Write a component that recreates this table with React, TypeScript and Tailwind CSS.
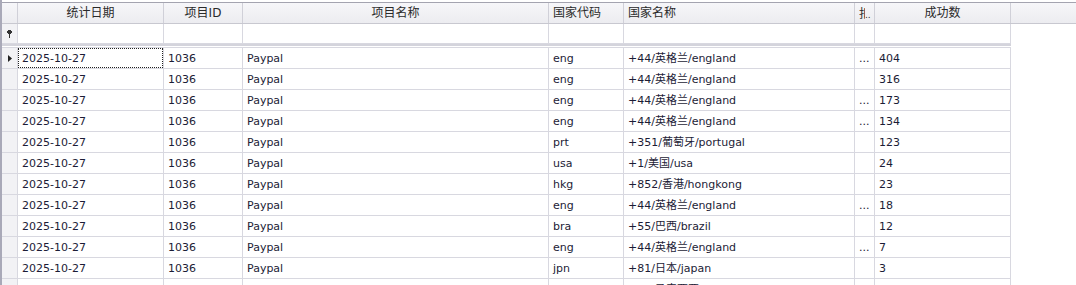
import React from 'react'

type Row = {
  date: string
  id: string
  name: string
  code: string
  country: string
  more: boolean
  count: string
}

const rows: Row[] = [
  { date: '2025-10-27', id: '1036', name: 'Paypal', code: 'eng', country: '+44/英格兰/england', more: true, count: '404' },
  { date: '2025-10-27', id: '1036', name: 'Paypal', code: 'eng', country: '+44/英格兰/england', more: false, count: '316' },
  { date: '2025-10-27', id: '1036', name: 'Paypal', code: 'eng', country: '+44/英格兰/england', more: true, count: '173' },
  { date: '2025-10-27', id: '1036', name: 'Paypal', code: 'eng', country: '+44/英格兰/england', more: true, count: '134' },
  { date: '2025-10-27', id: '1036', name: 'Paypal', code: 'prt', country: '+351/葡萄牙/portugal', more: false, count: '123' },
  { date: '2025-10-27', id: '1036', name: 'Paypal', code: 'usa', country: '+1/美国/usa', more: false, count: '24' },
  { date: '2025-10-27', id: '1036', name: 'Paypal', code: 'hkg', country: '+852/香港/hongkong', more: false, count: '23' },
  { date: '2025-10-27', id: '1036', name: 'Paypal', code: 'eng', country: '+44/英格兰/england', more: true, count: '18' },
  { date: '2025-10-27', id: '1036', name: 'Paypal', code: 'bra', country: '+55/巴西/brazil', more: false, count: '12' },
  { date: '2025-10-27', id: '1036', name: 'Paypal', code: 'eng', country: '+44/英格兰/england', more: true, count: '7' },
  { date: '2025-10-27', id: '1036', name: 'Paypal', code: 'jpn', country: '+81/日本/japan', more: false, count: '3' },
  { date: '2025-10-27', id: '1036', name: 'Paypal', code: 'mys', country: '+60/马来西亚/malaysia', more: false, count: '2' },
]

const line = 'border-[#d8d8e0]'

function HeaderCell({ w, children, center = true }: { w: string; children?: React.ReactNode; center?: boolean }) {
  return (
    <div
      className={`${w} shrink-0 h-full border-r border-[#d0d0d8] flex items-center overflow-hidden whitespace-nowrap ${
        center ? 'justify-center' : 'pl-[4px]'
      }`}
    >
      {children}
    </div>
  )
}

function Cell({ w, children }: { w: string; children?: React.ReactNode }) {
  return (
    <div className={`${w} shrink-0 h-full border-r ${line} flex items-center pl-[4px] pt-[2px] overflow-hidden whitespace-nowrap`}>
      {children}
    </div>
  )
}

export default function App() {
  return (
    <div className="w-[1076px] h-[285px] overflow-hidden bg-white font-['DejaVu_Sans','Noto_Sans_CJK_SC',sans-serif] text-[11px] text-[#1c1c36]">
      <div className="h-full border-l-2 border-[#a9a9b8] pt-[2px] flex flex-col">
        {/* column headers */}
        <div className="h-[22px] shrink-0 flex border-t border-b border-t-[#a4a4b0] border-b-[#c8c8d0] bg-gradient-to-b from-[#f6f6f9] to-[#ececf0] text-[12px] text-[#2a2a2a]">
          <div className="w-[16px] shrink-0 h-full border-r border-[#d0d0d8]" />
          <HeaderCell w="w-[146px]">统计日期</HeaderCell>
          <HeaderCell w="w-[79px]">项目ID</HeaderCell>
          <HeaderCell w="w-[306px]">项目名称</HeaderCell>
          <HeaderCell w="w-[75px]" center={false}>国家代码</HeaderCell>
          <HeaderCell w="w-[231px]" center={false}>国家名称</HeaderCell>
          <HeaderCell w="w-[20px]" center={false}>
            <span className="inline-block w-[6px] h-[16px] overflow-hidden">扣</span>
            <span className="text-[9px] leading-none pt-[4px]">..</span>
          </HeaderCell>
          <HeaderCell w="w-[136px]">成功数</HeaderCell>
          <div className="flex-1" />
        </div>

        {/* auto filter row */}
        <div className="w-[1009px] h-[20px] shrink-0 flex border-b border-[#d8d8e0]">
          <div className="w-[16px] shrink-0 h-full border-r border-[#d8d8e0] bg-[#f2f2f5] flex items-center justify-center">
            <svg width="5" height="8" viewBox="0 0 5 8">
              <path d="M1 0h3v1h1v2H4v1H3v4H2V4H1V3H0V1h1z" fill="#333" />
            </svg>
          </div>
          <Cell w="w-[146px]" />
          <Cell w="w-[79px]" />
          <Cell w="w-[306px]" />
          <Cell w="w-[75px]" />
          <Cell w="w-[231px]" />
          <Cell w="w-[20px]" />
          <Cell w="w-[136px]" />
        </div>
        <div className="w-[1009px] h-[2px] shrink-0 bg-[#d4d4dc]" />
        <div className="h-[1px] shrink-0" />

        {/* data rows */}
        <div className="w-[1009px] border-t border-[#d8d8e0]">
          {rows.map((r, i) => (
            <div key={i} className={`h-[21px] flex border-b ${line}`}>
              <div className={`w-[16px] shrink-0 h-full border-r ${line} bg-[#f2f2f5] flex items-center justify-center`}>
                {i === 0 && (
                  <svg width="4" height="7" viewBox="0 0 4 7">
                    <path d="M0 0L4 3.5L0 7z" fill="#222" />
                  </svg>
                )}
              </div>
              <div className={`w-[146px] shrink-0 h-full border-r ${line} relative flex items-center pl-[4px] pt-[2px] whitespace-nowrap`}>
                {i === 0 && <div className="absolute left-0 top-0 right-0 bottom-0 border border-dotted border-[#222]" />}
                {r.date}
              </div>
              <Cell w="w-[79px]">{r.id}</Cell>
              <Cell w="w-[306px]">{r.name}</Cell>
              <Cell w="w-[75px]">{r.code}</Cell>
              <Cell w="w-[231px]">{r.country}</Cell>
              <Cell w="w-[20px]">{r.more ? '...' : ''}</Cell>
              <Cell w="w-[136px]">{r.count}</Cell>
            </div>
          ))}
        </div>
      </div>
    </div>
  )
}
